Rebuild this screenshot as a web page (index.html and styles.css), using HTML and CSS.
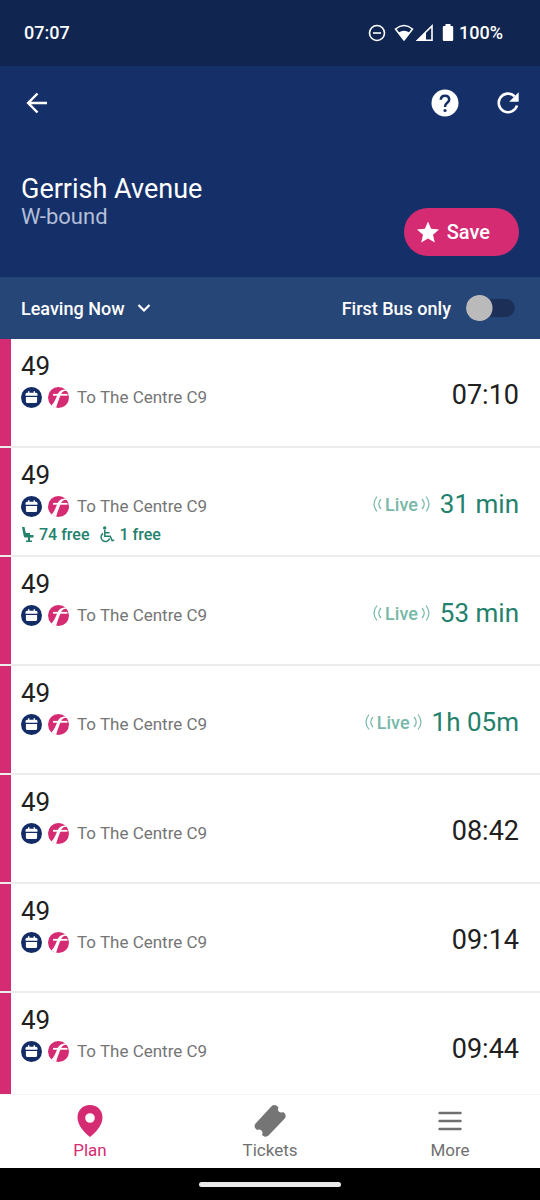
FILE: index.html
```html
<!DOCTYPE html>
<html lang="en">
<head>
<meta charset="utf-8">
<meta name="viewport" content="width=device-width, initial-scale=1">
<title>Gerrish Avenue departures</title>
<link rel="stylesheet" href="styles.css">
</head>
<body>
<svg class="defs" aria-hidden="true">
  <symbol id="calendar" viewBox="0 0 21 21">
    <circle cx="10.5" cy="10.5" r="10.5" fill="#132c66"/>
    <path d="M4.500 8.800V7.200q0-1.500 1.500-1.500h1V4.200h1.400v1.500h4.200V4.200H14v1.500h1q1.500 0 1.500 1.500v1.600zM4.900 10h11.200v4.500q0 1.500-1.500 1.500H6.400q-1.500 0-1.500-1.500z" fill="#fff"/>
  </symbol>
  <symbol id="first" viewBox="0 0 21 21">
    <circle cx="10.500" cy="10.500" r="10.500" fill="#d52b72"/>
    <path d="M3.500 18.500C7 15 7.800 11 9.300 8 10.800 4.500 13 2.400 18.500 2.600L19.300 3.800C15.500 3.500 14 5 12.900 7.500 11 12 9.500 16 8 21z" fill="#fff"/>
    <path d="M5 7.800h14.500" stroke="#fff" stroke-width="1.800"/>
  </symbol>
  <symbol id="waves" viewBox="0 0 9 18">
    <path d="M4 1.500Q-2 9 4 16.500M8 4Q3.500 9 8 14" fill="none" stroke="currentColor" stroke-width="1.200"/>
  </symbol>
</svg>
<div class="app">
  <div class="status">
    <span>07:07</span>
    <div class="status-icons">
      <svg width="18" height="18" viewBox="0 0 18 18"><circle cx="9" cy="9" r="7.500" fill="none" stroke="#fff" stroke-width="1.600"/><path d="M5 9h8" stroke="#fff" stroke-width="1.600"/></svg>
      <svg class="wifi" width="20" height="18" viewBox="0 0 20 18"><path d="M1.500 5Q10-2 18.500 5L10 16z" fill="none" stroke="#fff" stroke-width="1.600" stroke-linejoin="round"/><path d="M4.500 8.500Q10 5 15.500 8.500L10 16z" fill="#fff"/></svg>
      <svg class="signal" width="18" height="18" viewBox="0 0 18 18"><path d="M1.500 16.200L16 2v14.200z" fill="none" stroke="#fff" stroke-width="1.600"/><path d="M1 16.500L10 7.500v9z" fill="#fff"/></svg>
      <svg width="12" height="18" viewBox="0 0 12 18"><path d="M3.500 0h5v2H10q1.200 0 1.200 1.200v12.600Q11.200 17 10 17H2Q.8 17 .8 15.800V3.200Q.8 2 2 2h1.500z" fill="#fff"/></svg>
      <span>100%</span>
    </div>
  </div>
  <header class="header">
    <div class="toolbar">
      <button class="icon-btn" aria-label="Back"><svg width="24" height="24" viewBox="0 0 24 24"><path d="M22 12H4M12.500 2.500L3.200 12l9.300 9.500" fill="none" stroke="#fff" stroke-width="2.500"/></svg></button>
      <div class="actions">
        <button class="icon-btn" aria-label="Help"><svg width="28" height="28" viewBox="0 0 28 28"><circle cx="14" cy="14" r="13.500" fill="#fff"/><path d="M9.800 10.800Q10 6.800 14 6.800t4.200 3.700Q18.200 12.300 16 14T14 18" fill="none" stroke="#153069" stroke-width="2.600"/><circle cx="14" cy="21.500" r="1.600" fill="#153069"/></svg></button>
        <button class="icon-btn" aria-label="Refresh"><svg width="22" height="22" viewBox="0 0 22 22"><path d="M20 13.500A9.300 9.300 0 1 1 17.600 4.300" fill="none" stroke="#fff" stroke-width="2.600"/><path d="M21.700.300v9.500h-9.500z" fill="#fff"/></svg></button>
      </div>
    </div>
    <div class="heading">
      <div class="stop"><h1>Gerrish Avenue</h1><p>W-bound</p></div>
      <button class="save"><svg width="22" height="22" viewBox="0 0 22 22"><path d="M11 .500l3.100 7.300 7.900.700-6 5.200 1.800 7.800L11 17.400l-6.800 4.100L6 13.700 0 8.500l7.900-.700z" fill="#fff"/></svg>Save</button>
    </div>
  </header>
  <div class="filters">
    <button class="leaving">Leaving Now<svg width="14" height="10" viewBox="0 0 14 10"><path d="M1.500 2L7 7.500 12.500 2" fill="none" stroke="#fff" stroke-width="2.200"/></svg></button>
    <label class="only">First Bus only<input class="switch" type="checkbox" role="switch"></label>
  </div>
  <main class="list">
    <article class="row">
      <div class="service"><h2>49</h2><p class="to"><svg><use href="#calendar"/></svg><svg><use href="#first"/></svg><span>To The Centre C9</span></p></div>
      <div class="time">07:10</div>
    </article>
    <article class="row">
      <div class="service"><h2>49</h2><p class="to"><svg><use href="#calendar"/></svg><svg><use href="#first"/></svg><span>To The Centre C9</span></p>
        <p class="free">
          <svg width="14" height="17" viewBox="0 0 14 17"><path d="M1 1h2.500l1.300 6H9v2h3.500v2.500H4.500Q3 11.500 2.700 10zM7 11.500h2v3h2V16H5v-1.500h2z" fill="#23816c"/></svg><span>74 free</span>
          <svg class="chair" width="16" height="17" viewBox="0 0 16 17"><circle cx="5.700" cy="2" r="1.700" fill="#23816c"/><path d="M5.800 4v6.200h5.400l2 4.600 2-1M6 6.700h4.500M4 7.500a4.400 4.400 0 1 0 6.600 5" fill="none" stroke="#23816c" stroke-width="1.500"/></svg><span>1 free</span>
        </p></div>
      <div class="time live"><span class="badge"><svg><use href="#waves"/></svg>Live<svg class="flip"><use href="#waves"/></svg></span>31 min</div>
    </article>
    <article class="row">
      <div class="service"><h2>49</h2><p class="to"><svg><use href="#calendar"/></svg><svg><use href="#first"/></svg><span>To The Centre C9</span></p></div>
      <div class="time live"><span class="badge"><svg><use href="#waves"/></svg>Live<svg class="flip"><use href="#waves"/></svg></span>53 min</div>
    </article>
    <article class="row">
      <div class="service"><h2>49</h2><p class="to"><svg><use href="#calendar"/></svg><svg><use href="#first"/></svg><span>To The Centre C9</span></p></div>
      <div class="time live"><span class="badge"><svg><use href="#waves"/></svg>Live<svg class="flip"><use href="#waves"/></svg></span>1h 05m</div>
    </article>
    <article class="row">
      <div class="service"><h2>49</h2><p class="to"><svg><use href="#calendar"/></svg><svg><use href="#first"/></svg><span>To The Centre C9</span></p></div>
      <div class="time">08:42</div>
    </article>
    <article class="row">
      <div class="service"><h2>49</h2><p class="to"><svg><use href="#calendar"/></svg><svg><use href="#first"/></svg><span>To The Centre C9</span></p></div>
      <div class="time">09:14</div>
    </article>
    <article class="row">
      <div class="service"><h2>49</h2><p class="to"><svg><use href="#calendar"/></svg><svg><use href="#first"/></svg><span>To The Centre C9</span></p></div>
      <div class="time">09:44</div>
    </article>
  </main>
  <nav class="tabs">
    <button class="tab active"><svg width="34" height="34" viewBox="0 0 34 34"><path fill-rule="evenodd" d="M17 1C9.500 1 4.500 6.500 4.500 13.500 4.500 21 11.500 29 17 33c5.500-4 12.500-12 12.500-19.500C29.500 6.500 24.500 1 17 1zm0 8.200a4.800 4.800 0 1 1 0 9.600 4.800 4.800 0 0 1 0-9.600z" fill="#d52b72"/></svg>Plan</button>
    <button class="tab"><svg width="34" height="34" viewBox="0 0 34 34"><path d="M18.500 2.200q2.700-2.200 5.500-.200l1.500 1.500q-1.300 2.500.500 4.200 1.900 1.500 4.300.200l1.500 1.500q2 2.800-.300 5.300L15.500 31.500q-2.700 2.200-5.500.200l-1-1q1.200-2.500-.600-4.100-1.900-1.600-4.400-.600L2.500 24.500q-2-2.800.300-5.300z" fill="#757575"/></svg>Tickets</button>
    <button class="tab"><svg width="34" height="34" viewBox="0 0 34 34"><path d="M6.500 9h21M6.500 17h21M6.500 25h21" stroke="#707070" stroke-width="2.400" stroke-linecap="round"/></svg>More</button>
  </nav>
  <div class="gesture"><span></span></div>
</div>
</body>
</html>
```
FILE: styles.css
```css
* { box-sizing: border-box; }
body, h1, h2, p { margin: 0; font-weight: 400; }
body { font-family: Roboto, sans-serif; color: #202020; background: #fff; }
button { font: inherit; color: inherit; background: none; border: 0; padding: 0; cursor: pointer; }
svg { display: block; flex: none; }
.defs { position: absolute; width: 0; height: 0; }
.app { height: 100vh; display: flex; flex-direction: column; }
.status, .header, .filters, .tabs, .gesture { flex: none; }
.status { display: flex; align-items: center; justify-content: space-between; padding: 22px 37px 22px 24px; background: #102650; color: #fff; font-size: 18px; font-weight: 500; line-height: 22px; }
.status-icons { display: flex; align-items: center; }
.wifi { margin-left: 8px; }
.signal { margin: 0 8px 0 2px; }
.status-icons span { margin-left: 5px; }
.header { background: #153069; color: #fff; padding: 20px 21px 21px; }
.toolbar { display: flex; justify-content: space-between; align-items: center; height: 33px; padding-left: 4px; }
.actions { display: flex; align-items: center; gap: 38px; }
.heading { display: flex; justify-content: space-between; align-items: flex-end; margin-top: 54px; height: 83px; }
.stop { align-self: flex-start; }
h1 { font-size: 27px; line-height: 32px; }
.stop p { font-size: 22px; line-height: 24px; color: #b3bfd8; }
.save { display: flex; align-items: center; gap: 8px; height: 48px; padding: 0 29px 0 13px; border-radius: 24px; background: #d52b72; font-size: 20px; font-weight: 500; }
.filters { display: flex; justify-content: space-between; align-items: center; height: 62px; padding: 0 25px 0 21px; background: #274678; color: #fff; font-size: 18px; font-weight: 500; }
.leaving, .only { display: flex; align-items: center; }
.leaving { gap: 12px; }
.only { gap: 15px; }
.switch { appearance: none; margin: 0; width: 49px; height: 26px; border-radius: 13px; background: radial-gradient(circle at 13px 13px, #bababa 13px, transparent 14px), linear-gradient(#1c3057, #1c3057) right center / 36px 18px no-repeat; clip-path: path("M13 0A13 13 0 0 0 13 26A13 13 0 0 0 23 22H40A9 9 0 0 0 40 4H23A13 13 0 0 0 13 0Z"); }
.list { flex: 1; min-height: 0; overflow: hidden; }
.row { display: flex; justify-content: space-between; height: 109px; padding: 10px 21px 0; background: linear-gradient(#ececec, #ececec) bottom / 100% 2px no-repeat, linear-gradient(#d52b72, #d52b72) left / 11px 100% no-repeat; }
h2 { font-size: 26px; line-height: 34px; }
.to { display: flex; align-items: center; height: 28px; gap: 6px; font-size: 17px; color: #757575; }
.to svg { width: 21px; height: 21px; }
.to span { margin-left: 2px; }
.free { display: flex; align-items: center; height: 28px; gap: 4px; font-size: 16px; font-weight: 500; color: #23816c; }
.chair { margin-left: 6px; }
.time { display: flex; align-items: center; align-self: flex-start; height: 92px; font-size: 27px; }
.live { color: #23816c; font-size: 26px; }
.badge { display: flex; align-items: center; gap: 3px; margin-right: 10px; font-size: 18px; font-weight: 500; color: #78b8a9; }
.badge svg { width: 9px; height: 18px; }
.flip { transform: scaleX(-1); }
.tabs { display: grid; grid-template-columns: repeat(3, 1fr); height: 74px; background: #fff; border-top: 1px solid #f4f4f4; }
.tab { display: flex; flex-direction: column; align-items: center; padding-top: 9px; gap: 2px; font-size: 17px; line-height: 20px; color: #707070; }
.active { color: #d52b72; }
.gesture { display: flex; justify-content: center; align-items: center; height: 32px; background: #000; }
.gesture span { width: 142px; height: 5px; border-radius: 3px; background: #eaeaea; }
```
